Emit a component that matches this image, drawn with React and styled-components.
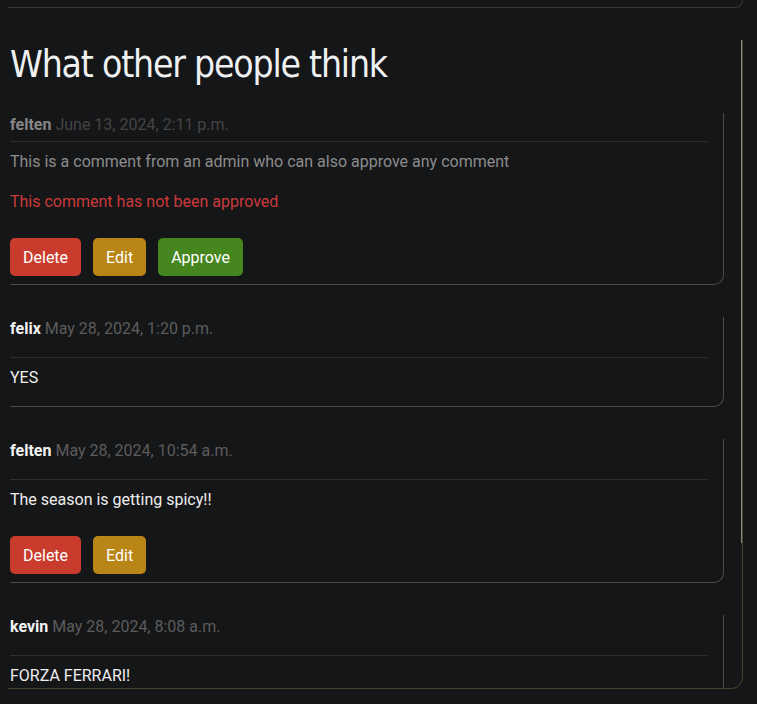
import React from "react";
import styled, {createGlobalStyle, css} from "styled-components";

const GlobalStyle = createGlobalStyle`
  html, body {
    margin: 0;
    padding: 0;
    background: #151618;
  }
  body {
    font-family: Roboto, "Liberation Sans", sans-serif;
    font-size: 16px;
    color: #eeeeee;
  }
  * {
    box-sizing: border-box;
  }
`;

const Page = styled.div`
  padding: 0 14px 0 8px;
  height: 704px;
  overflow: hidden;
`;

const PrevCard = styled.div`
  height: 8px;
  border-right: 1px solid #3a3a33;
  border-bottom: 1px solid #3a3a33;
  border-bottom-right-radius: 12px;
`;

const CommentSection = styled.section`
  position: relative;
  margin-top: 32px;
  height: 649px;
  padding: 0 18px 0 2px;
  border-right: 1px solid #44432f;
  border-bottom: 1px solid #44432f;
  border-bottom-right-radius: 12px;
  overflow: hidden;

  &::after {
    content: "";
    position: absolute;
    top: 0;
    right: 0;
    width: 1px;
    height: 503px;
    background: #8e8b77;
  }
`;

const Heading = styled.h2`
  margin: 0 0 25px 0;
  padding-top: 2px;
  font-family: "DejaVu Sans Condensed", "Liberation Sans Narrow", sans-serif;
  font-size: 37px;
  font-weight: 400;
  letter-spacing: -1.2px;
  line-height: 46px;
  color: #eef0f2;
`;

const Card = styled.article`
  margin-bottom: 32px;
  padding-right: 15px;
  border-right: 1px solid #4b4b4b;
  border-bottom: 1px solid #4b4b4b;
  border-bottom-right-radius: 10px;
`;

const CardHeader = styled.div`
  line-height: 24px;
  margin-bottom: ${({$compact}) => ($compact ? "4px" : "16px")};

  strong {
    font-weight: 700;
    color: ${({$dim}) => ($dim ? "#858585" : "#f3f3f3")};
  }

  span {
    color: ${({$dim}) => ($dim ? "#444444" : "#5c5c5c")};
  }
`;

const Divider = styled.hr`
  margin: 0;
  border: none;
  height: 1px;
  background: #2d2e30;
`;

const Body = styled.p`
  margin: 8px 0 16px 0;
  line-height: 24px;
  color: ${({$dim}) => ($dim ? "#8c8c8c" : "#eeeeee")};
`;

const Notice = styled.p`
  margin: 0 0 16px 0;
  line-height: 24px;
  color: #cc3a3a;
`;

const Actions = styled.div`
  display: flex;
  gap: 12px;
  margin-top: 24px;
  padding-bottom: 8px;
`;

const Button = styled.button`
  height: 38px;
  padding: 0 13px;
  border: none;
  border-radius: 5px;
  font-family: Roboto, "Liberation Sans", sans-serif;
  font-size: 16px;
  color: #ffffff;
  cursor: pointer;

  ${({$variant}) => {
    if ($variant === "delete") return css`background: #c93c2d;`;
    if ($variant === "edit") return css`background: #b98516;`;
    return css`background: #46861f;`;
  }}
`;

const comments = [
    {
        author: "felten",
        date: "June 13, 2024, 2:11 p.m.",
        body: "This is a comment from an admin who can also approve any comment",
        approved: false,
        canEdit: true,
    },
    {
        author: "felix",
        date: "May 28, 2024, 1:20 p.m.",
        body: "YES",
        approved: true,
        canEdit: false,
    },
    {
        author: "felten",
        date: "May 28, 2024, 10:54 a.m.",
        body: "The season is getting spicy!!",
        approved: true,
        canEdit: true,
    },
    {
        author: "kevin",
        date: "May 28, 2024, 8:08 a.m.",
        body: "FORZA FERRARI!",
        approved: true,
        canEdit: false,
    },
];

const Comment = ({comment}) => {
    const dim = !comment.approved;
    return (
        <Card>
            <CardHeader $dim={dim} $compact={dim}>
                <strong>{comment.author}</strong> <span>{comment.date}</span>
            </CardHeader>
            <Divider />
            <Body $dim={dim}>{comment.body}</Body>
            {dim && <Notice>This comment has not been approved</Notice>}
            {comment.canEdit && (
                <Actions>
                    <Button $variant="delete">Delete</Button>
                    <Button $variant="edit">Edit</Button>
                    {dim && <Button $variant="approve">Approve</Button>}
                </Actions>
            )}
        </Card>
    );
};

const App = () => {
    return (
        <>
            <GlobalStyle />
            <Page>
                <PrevCard />
                <CommentSection>
                    <Heading>What other people think</Heading>
                    {comments.map((c, i) => (
                        <Comment key={i} comment={c} />
                    ))}
                </CommentSection>
            </Page>
        </>
    );
};

export default App;
